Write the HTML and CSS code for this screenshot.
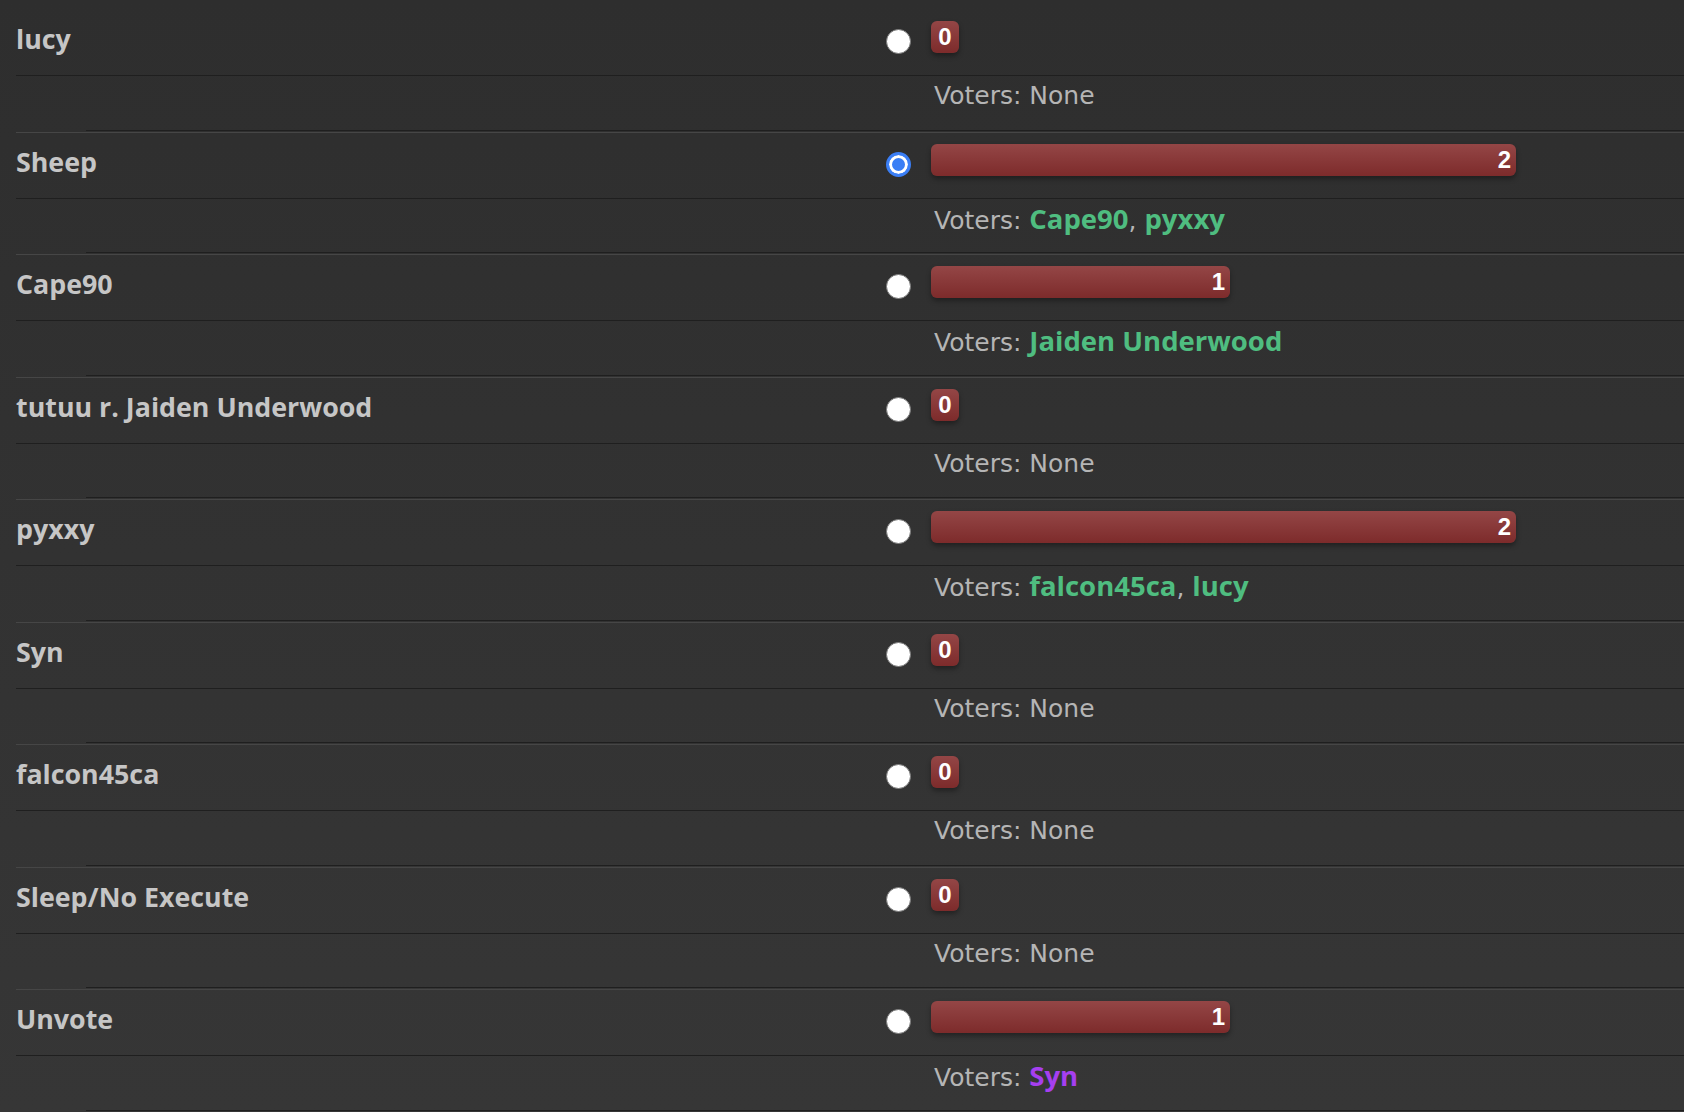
FILE: index.html
```html
<!DOCTYPE html>
<html lang="en">
<head>
    <meta charset="UTF-8">
    <meta name="viewport" content="width=device-width, initial-scale=1.0">
    <title>Vote Tally</title>
    <link rel="stylesheet" href="styles.css">
</head>
<body>
    <form class="ballot">
        <div class="option">
            <div class="choice">
                <div class="name">lucy</div>
                <div class="pick"><input type="radio" name="vote" value="lucy"></div>
                <div class="tally"><span class="bar empty">0</span></div>
            </div>
            <div class="voters">Voters: None</div>
        </div>

        <div class="option">
            <div class="choice">
                <div class="name">Sheep</div>
                <div class="pick"><input type="radio" name="vote" value="Sheep" checked></div>
                <div class="tally"><span class="bar" style="width: 585px">2</span></div>
            </div>
            <div class="voters">Voters: <span class="voter">Cape90</span>, <span class="voter">pyxxy</span></div>
        </div>

        <div class="option">
            <div class="choice">
                <div class="name">Cape90</div>
                <div class="pick"><input type="radio" name="vote" value="Cape90"></div>
                <div class="tally"><span class="bar" style="width: 299px">1</span></div>
            </div>
            <div class="voters">Voters: <span class="voter">Jaiden Underwood</span></div>
        </div>

        <div class="option">
            <div class="choice">
                <div class="name">tutuu r. Jaiden Underwood</div>
                <div class="pick"><input type="radio" name="vote" value="tutuu"></div>
                <div class="tally"><span class="bar empty">0</span></div>
            </div>
            <div class="voters">Voters: None</div>
        </div>

        <div class="option">
            <div class="choice">
                <div class="name">pyxxy</div>
                <div class="pick"><input type="radio" name="vote" value="pyxxy"></div>
                <div class="tally"><span class="bar" style="width: 585px">2</span></div>
            </div>
            <div class="voters">Voters: <span class="voter">falcon45ca</span>, <span class="voter">lucy</span></div>
        </div>

        <div class="option">
            <div class="choice">
                <div class="name">Syn</div>
                <div class="pick"><input type="radio" name="vote" value="Syn"></div>
                <div class="tally"><span class="bar empty">0</span></div>
            </div>
            <div class="voters">Voters: None</div>
        </div>

        <div class="option">
            <div class="choice">
                <div class="name">falcon45ca</div>
                <div class="pick"><input type="radio" name="vote" value="falcon45ca"></div>
                <div class="tally"><span class="bar empty">0</span></div>
            </div>
            <div class="voters">Voters: None</div>
        </div>

        <div class="option">
            <div class="choice">
                <div class="name">Sleep/No Execute</div>
                <div class="pick"><input type="radio" name="vote" value="sleep"></div>
                <div class="tally"><span class="bar empty">0</span></div>
            </div>
            <div class="voters">Voters: None</div>
        </div>

        <div class="option">
            <div class="choice">
                <div class="name">Unvote</div>
                <div class="pick"><input type="radio" name="vote" value="unvote"></div>
                <div class="tally"><span class="bar" style="width: 299px">1</span></div>
            </div>
            <div class="voters">Voters: <span class="voter dead">Syn</span></div>
        </div>
    </form>
</body>
</html>
```

FILE: styles.css
```css
html {
    background: #2e2e2e;
}

body {
    margin: 0;
    padding: 10px 0 0 16px;
    min-height: 100vh;
    box-sizing: border-box;
    background: linear-gradient(#2e2e2e, #363636);
    font-family: "DejaVu Sans", sans-serif;
    overflow: hidden;
}

.ballot {
    margin: 0;
}

.option {
    margin-bottom: 1px;
}

.option + .option {
    border-top: 1px solid #464646;
}

.choice {
    display: grid;
    grid-template-columns: 866px 32px 1fr;
    height: 65px;
    border-bottom: 1px solid #1f1f1f;
}

.name {
    padding-top: 11px;
    font-family: "Open Sans", sans-serif;
    font-weight: 700;
    font-size: 26.8px;
    line-height: 36px;
    color: #c6c6c6;
    white-space: nowrap;
}

.pick {
    display: flex;
    justify-content: center;
    align-items: flex-start;
    padding-top: 19px;
}

.pick input {
    appearance: none;
    -webkit-appearance: none;
    margin: 0;
    width: 25px;
    height: 25px;
    box-sizing: border-box;
    border-radius: 50%;
    background: #fff;
    border: 1.5px solid #787878;
}

.pick input:checked {
    background: #3a7ef5;
    border: 3px solid #3a7ef5;
    box-shadow: inset 0 0 0 3px #fff;
}

.tally {
    padding: 11px 0 0 17px;
}

.bar {
    display: inline-block;
    height: 32px;
    min-width: 28px;
    box-sizing: border-box;
    padding: 0 5px;
    border-radius: 6px;
    background: linear-gradient(#944646, #7d2b2b);
    box-shadow: 0 3px 5px rgba(0,0,0,0.35);
    color: #fff;
    font-family: "Liberation Sans", sans-serif;
    font-weight: 700;
    font-size: 24px;
    line-height: 32px;
    text-align: right;
}

.bar.empty {
    text-align: center;
}

.voters {
    height: 54.5px;
    box-sizing: border-box;
    padding: 5px 0 0 918px;
    font-size: 25px;
    line-height: 30px;
    color: #b5b5b5;
    white-space: nowrap;
    background: linear-gradient(#1f1f1f, #1f1f1f) 70px 100% / calc(100% - 70px) 1px no-repeat;
}

.voter {
    font-family: "Open Sans", sans-serif;
    font-weight: 700;
    font-size: 27.5px;
    color: #4fbd80;
}

.voter.dead {
    color: #a63ff0;
}
```
